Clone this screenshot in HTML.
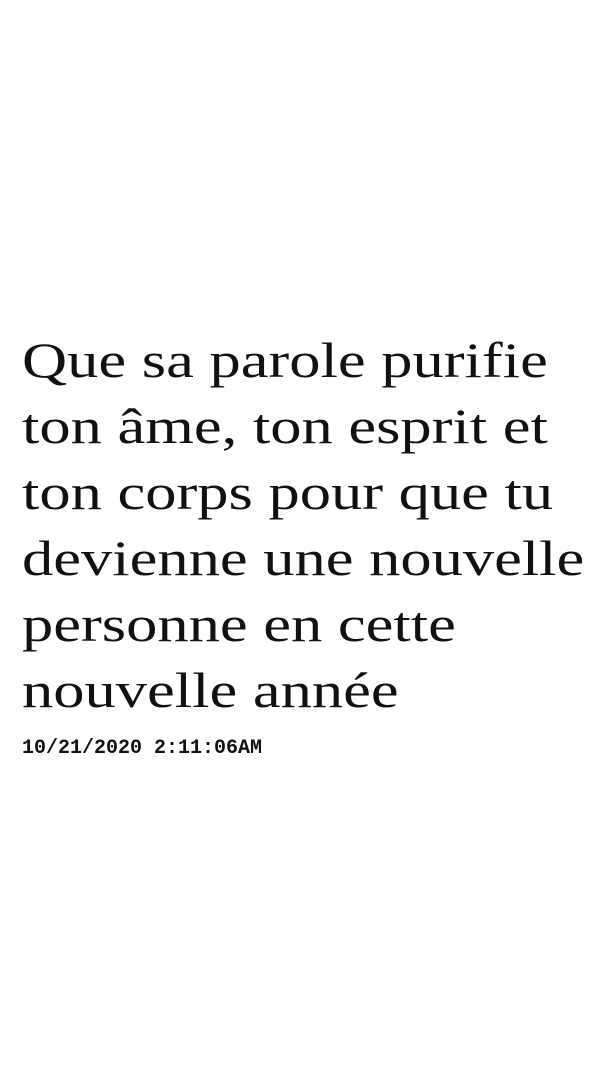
<!DOCTYPE html>
<html><head><meta charset="utf-8"><style>
html,body{margin:0;padding:0;background:#fff;width:608px;height:1080px;overflow:hidden}
.q{position:absolute;left:22px;top:327px;font-family:"Liberation Serif",serif;font-size:50px;line-height:66px;color:#111}
.q div{white-space:nowrap;transform:scaleX(1.25);transform-origin:left}
.t{position:absolute;left:22px;top:737px;font-family:"Liberation Mono",monospace;font-weight:bold;font-size:20px;line-height:24px;color:#111}
</style></head><body>
<div class="q">
<div>Que sa parole purifie</div>
<div>ton âme, ton esprit et</div>
<div>ton corps pour que tu</div>
<div>devienne une nouvelle</div>
<div>personne en cette</div>
<div>nouvelle année</div>
</div>
<div class="t">10/21/2020 2:11:06AM</div>
</body></html>
